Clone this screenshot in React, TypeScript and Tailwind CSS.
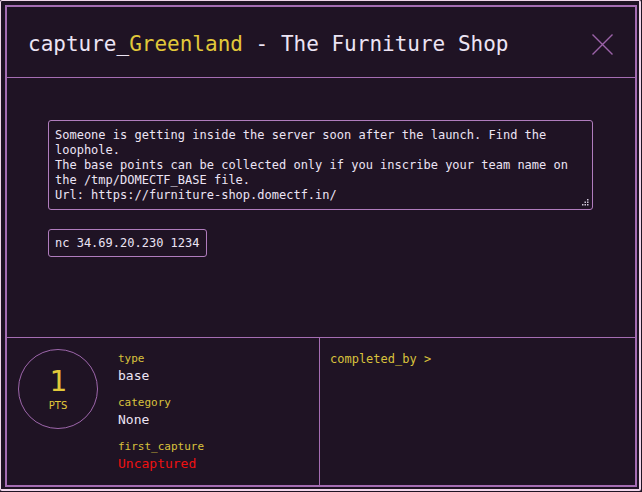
const mono = { fontFamily: '"DejaVu Sans Mono", "Liberation Mono", monospace' };

function Field({ label, value, valueClass }: { label: string; value: string; valueClass: string }) {
  return (
    <div className="flex flex-col">
      <span className="text-[11px] leading-[14px] text-[#d9c23c]">{label}</span>
      <span className={`text-[13px] leading-[20px] ${valueClass}`}>{value}</span>
    </div>
  );
}

export default function App() {
  return (
    <div className="w-[642px] h-[492px] bg-[#1f1324] overflow-hidden" style={mono}>
      <div className="w-[641px] h-[491px] border-l border-t border-r-2 border-b-2 border-[#f0d6ea] rounded-[2px] pl-[4px] pt-[4px] pr-[2px] pb-[2px]">
        <div className="w-[632px] h-[482px] border-2 border-[#a56db3] flex flex-col">
          {/* Header */}
          <div className="h-[71px] shrink-0 border-b border-[#a56db3] flex items-center justify-between pl-[21px] pr-[22px] pt-[4px]">
            <h1 className="text-[21px] leading-none text-[#ece4f4] whitespace-nowrap">
              capture_<span className="text-[#e2c93a]">Greenland</span> - The Furniture Shop
            </h1>
            <svg width="21" height="21" viewBox="0 0 21 21" className="text-[#9b62a8]">
              <path d="M0.5 0.5 L20.5 20.5 M20.5 0.5 L0.5 20.5" stroke="currentColor" strokeWidth="1.4" fill="none" />
            </svg>
          </div>

          {/* Body */}
          <div className="h-[260px] shrink-0 border-b border-[#a56db3] pl-[41px] pr-[42px] pt-[42px]">
            <div className="relative h-[90px] border border-[#b07cbd] rounded-[3px] px-[6px] pt-[7px] text-[12px] leading-[15px] text-[#ece4f4]">
              <p>Someone is getting inside the server soon after the launch. Find the loophole.</p>
              <p>The base points can be collected only if you inscribe your team name on the /tmp/DOMECTF_BASE file.</p>
              <p>Url: https://furniture-shop.domectf.in/</p>
              <svg className="absolute right-[3px] bottom-[3px]" width="7" height="7" viewBox="0 0 7 7" fill="#cfc6d8">
                <rect x="5" y="0" width="1.5" height="1.5" />
                <rect x="2.5" y="2.5" width="1.5" height="1.5" />
                <rect x="5" y="2.5" width="1.5" height="1.5" />
                <rect x="0" y="5" width="1.5" height="1.5" />
                <rect x="2.5" y="5" width="1.5" height="1.5" />
                <rect x="5" y="5" width="1.5" height="1.5" />
              </svg>
            </div>
            <div className="mt-[19px] inline-flex items-center h-[28px] border border-[#b07cbd] rounded-[3px] px-[6px] text-[12px] text-[#ece4f4]">
              nc 34.69.20.230 1234
            </div>
          </div>

          {/* Footer */}
          <div className="flex-1 flex">
            <div className="w-[313px] shrink-0 border-r border-[#a56db3] flex pl-[11px] pt-[11px]">
              <div className="w-[80px] h-[80px] rounded-full border border-[#9d66ab] flex flex-col items-center justify-center shrink-0">
                <span className="text-[29px] leading-[30px] text-[#e2c93a]">1</span>
                <span className="text-[10px] leading-[12px] text-[#e2c93a] mt-[4px]" style={{ fontFamily: '"DejaVu Sans", sans-serif' }}>PTS</span>
              </div>
              <div className="ml-[20px] pt-[3px] flex flex-col gap-[10px]">
                <Field label="type" value="base" valueClass="text-[#ece4f4]" />
                <Field label="category" value="None" valueClass="text-[#ece4f4]" />
                <Field label="first_capture" value="Uncaptured" valueClass="text-[#ee1111]" />
              </div>
            </div>
            <div className="flex-1 pl-[10px] pt-[8px]">
              <span className="text-[12px] leading-[15px] text-[#d9c23c]">completed_by &gt;</span>
            </div>
          </div>
        </div>
      </div>
    </div>
  );
}
